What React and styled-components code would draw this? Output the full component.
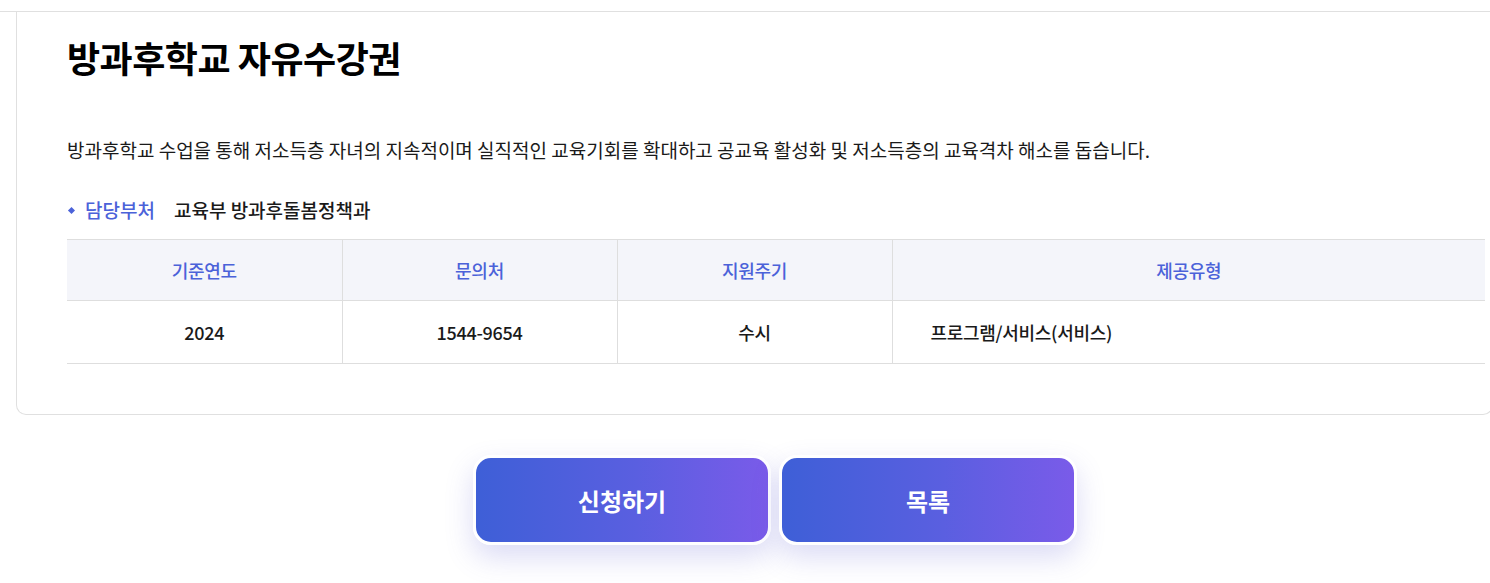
import React from "react";
import styled, { createGlobalStyle } from "styled-components";

const GlobalStyle = createGlobalStyle`
  html, body {
    margin: 0;
    padding: 0;
    background: #fff;
    overflow: hidden;
  }
  body {
    font-family: "Noto Sans CJK KR", "Noto Sans", sans-serif;
    color: #111;
  }
`;

const Page = styled.div`
  width: 1490px;
  height: 583px;
  overflow: hidden;
`;

const TopBar = styled.div`
  height: 11px;
  border-bottom: 1px solid #e0e0e0;
`;

const Card = styled.section`
  margin: 0 -3px 0 16px;
  border: 1px solid #e0e0e0;
  border-top: none;
  border-radius: 0 0 10px 10px;
  padding: 19px 7px 50px 50px;
`;

const Title = styled.h2`
  margin: 0;
  font-size: 36px;
  font-weight: 700;
  letter-spacing: -0.5px;
  line-height: 52px;
  color: #000;
`;

const Desc = styled.p`
  margin: 53px 0 0;
  font-size: 19px;
  line-height: 28px;
  color: #1a1a1a;
`;

const Dept = styled.div`
  display: flex;
  align-items: center;
  gap: 19px;
  margin-top: 32px;
  font-size: 19px;
  font-weight: 500;
  line-height: 28px;
`;

const DeptLabel = styled.span`
  display: flex;
  align-items: center;
  gap: 11px;
  color: #4b62d9;
  &::before {
    content: "";
    width: 5px;
    height: 5px;
    margin-left: 2px;
    background: #4b62d9;
    transform: rotate(45deg);
  }
`;

const DeptValue = styled.span`
  color: #1a1a1a;
`;

const Table = styled.table`
  margin-top: 15px;
  width: 100%;
  border-collapse: collapse;
  table-layout: fixed;
  font-size: 18px;
  letter-spacing: -0.3px;
`;

const Th = styled.th`
  height: 58px;
  background: #f4f5fa;
  color: #4b62d9;
  font-weight: 500;
  text-align: center;
  border-top: 1px solid #dedede;
  border-bottom: 1px solid #dedede;
  & + & {
    border-left: 1px solid #dedede;
  }
`;

const Td = styled.td`
  height: 62px;
  color: #1a1a1a;
  font-weight: 500;
  text-align: ${(p) => (p.$left ? "left" : "center")};
  padding: ${(p) => (p.$left ? "0 38px" : "0")};
  border-bottom: 1px solid #dedede;
  & + & {
    border-left: 1px solid #dedede;
  }
`;

const Actions = styled.div`
  display: flex;
  justify-content: center;
  gap: 8px;
  padding: 40px 0 0 60px;
`;

const Button = styled.button`
  width: 298px;
  height: 90px;
  border: 3px solid #fff;
  border-radius: 18px;
  background: linear-gradient(90deg, #3e5fd7 0%, #5a5fe0 55%, #7a5be9 100%);
  box-shadow: 0 12px 28px rgba(90, 90, 210, 0.22);
  color: #fff;
  font-family: "Noto Sans CJK KR", "Noto Sans", sans-serif;
  font-size: 24px;
  font-weight: 700;
  cursor: pointer;
`;

const info = [
  { head: "기준연도", value: "2024" },
  { head: "문의처", value: "1544-9654" },
  { head: "지원주기", value: "수시" },
  { head: "제공유형", value: "프로그램/서비스(서비스)", left: true },
];

export default function App() {
  return (
    <Page>
      <GlobalStyle />
      <TopBar />
      <Card>
        <Title>방과후학교 자유수강권</Title>
        <Desc>
          방과후학교 수업을 통해 저소득층 자녀의 지속적이며 실직적인 교육기회를
          확대하고 공교육 활성화 및 저소득층의 교육격차 해소를 돕습니다.
        </Desc>
        <Dept>
          <DeptLabel>담당부처</DeptLabel>
          <DeptValue>교육부 방과후돌봄정책과</DeptValue>
        </Dept>
        <Table>
          <colgroup>
            <col style={{ width: 275 }} />
            <col style={{ width: 275 }} />
            <col style={{ width: 275 }} />
            <col />
          </colgroup>
          <thead>
            <tr>
              {info.map((c) => (
                <Th key={c.head}>{c.head}</Th>
              ))}
            </tr>
          </thead>
          <tbody>
            <tr>
              {info.map((c) => (
                <Td key={c.head} $left={c.left}>
                  {c.value}
                </Td>
              ))}
            </tr>
          </tbody>
        </Table>
      </Card>
      <Actions>
        <Button>신청하기</Button>
        <Button>목록</Button>
      </Actions>
    </Page>
  );
}
